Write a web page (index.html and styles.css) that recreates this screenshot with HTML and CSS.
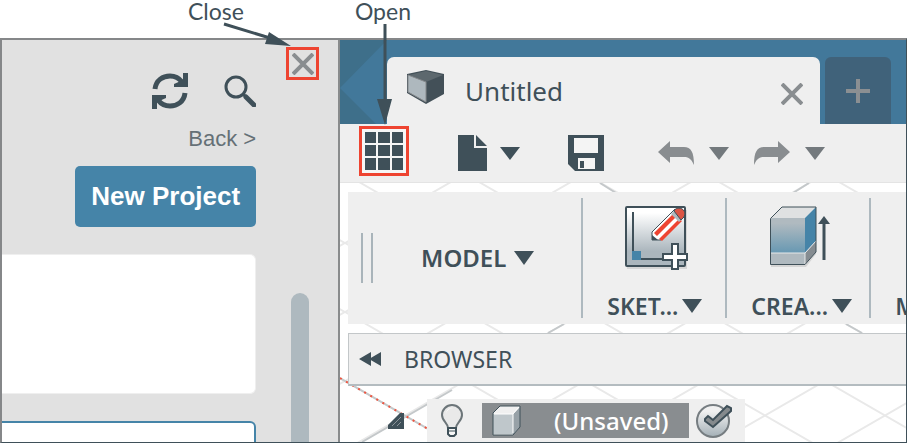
FILE: index.html
```html
<!DOCTYPE html>
<html lang="en">
<head>
<meta charset="utf-8">
<title>Untitled</title>
<link rel="stylesheet" href="styles.css">
</head>
<body>
<div class="captions">
  <span class="caption">Close</span>
  <span class="caption">Open</span>
</div>
<div class="frame">
  <aside class="panel">
    <div class="panel-main">
      <div class="panel-tools">
        <button class="icon-btn" aria-label="Refresh">
          <svg width="36" height="36" viewBox="0 0 36 36"><g fill="none" stroke="#3f5059" stroke-width="5"><path d="M3 16C4 7 11 3 18 3c5 0 9 2 12 6"/><path d="M33 20c-1 9-8 13-15 13-5 0-9-2-12-6"/></g><path fill="#3f5059" d="M36 0v14H22v-3l9-4V0zM0 36V22h14v3l-9 4v7z"/><path fill="#3f5059" d="M35 3v11H22zM1 33V22h13z"/></svg>
        </button>
        <button class="icon-btn" aria-label="Search">
          <svg width="32" height="32" viewBox="0 0 32 32" fill="none" stroke="#3f5059"><circle cx="12" cy="12" r="10" stroke-width="3"/><path d="M19 19l3 3" stroke-width="3"/><path d="M22 22l8 8" stroke-width="5" stroke-linecap="round"/></svg>
        </button>
      </div>
      <a class="back" href="#">Back &gt;</a>
      <button class="new-project">New Project</button>
      <div class="card"></div>
      <div class="card card-selected"></div>
    </div>
    <div class="rail">
      <button class="close-panel" aria-label="Close panel">
        <svg width="22" height="22" viewBox="0 0 22 22" stroke="#898d90" stroke-width="4"><path d="M1 1l20 20M21 1L1 21"/></svg>
      </button>
      <div class="scroll-thumb"></div>
    </div>
  </aside>
  <main class="workspace">
    <div class="tabbar">
      <svg class="facet" width="47" height="84" viewBox="0 0 47 84"><path fill="#3e6f8a" d="M0 0h47L0 48zM0 48l36 36H0z"/></svg>
      <div class="tab">
        <svg class="tab-cube" width="38" height="34" viewBox="0 0 38 34"><path fill="#435058" d="M0 4L19 0l18 4v20L19 34 0 23z"/><path fill="#5d686e" d="M2 5l17-4 17 4-17 7z"/><path fill="#aeb8be" stroke="#86898c" d="M1 5l18 7v20L1 22z"/></svg>
        <span class="tab-title">Untitled</span>
        <button class="icon-btn tab-close" aria-label="Close tab">
          <svg width="22" height="22" viewBox="0 0 22 22" stroke="#898d90" stroke-width="4"><path d="M1 1l20 20M21 1L1 21"/></svg>
        </button>
      </div>
      <button class="new-tab" aria-label="New tab">
        <svg width="24" height="24" viewBox="0 0 24 24" stroke="#8b8f92" stroke-width="4"><path d="M12 0v24M0 12h24"/></svg>
      </button>
    </div>
    <div class="toolbar">
      <button class="grid-btn" aria-label="Data panel">
        <svg width="38" height="38" viewBox="0 0 38 38" fill="#3f5059"><path d="M0 0h11v11H0zM13 0h12v11H13zM27 0h11v11H27zM0 13h11v11H0zM13 13h12v11H13zM27 13h11v11H27zM0 26h11v12H0zM13 26h12v12H13zM27 26h11v12H27z"/></svg>
      </button>
      <button class="icon-btn tool-file" aria-label="File">
        <svg width="29" height="36" viewBox="0 0 29 36" fill="#3f5059"><path d="M0 0h16v13h13v23H0zM18 0l11 11H18z"/></svg>
        <svg width="20" height="13" viewBox="0 0 20 13"><path fill="#3f5059" d="M0 0h20L10 13z"/></svg>
      </button>
      <button class="icon-btn tool-save" aria-label="Save">
        <svg width="36" height="36" viewBox="0 0 36 36"><path fill="#3f5059" d="M0 0h36v36H7l-7-7z"/><path fill="#f4f4f4" d="M6 3h24v15H6zM10 23h17v11H10z"/><path fill="#3f5059" d="M12 26h4v7h-4z"/></svg>
      </button>
      <button class="icon-btn tool-undo" aria-label="Undo">
        <svg width="36" height="24" viewBox="0 0 36 24"><path fill="#898d90" d="M0 11L12 0v6h14c7 0 10 5 10 18-3-7-6-8-10-8H12v6z"/></svg>
        <svg width="20" height="13" viewBox="0 0 20 13"><path fill="#73797d" d="M0 0h20L10 13z"/></svg>
      </button>
      <button class="icon-btn tool-redo" aria-label="Redo">
        <svg width="36" height="24" viewBox="0 0 36 24"><path fill="#898d90" d="M36 11L24 0v6H10C3 6 0 11 0 24c3-7 6-8 10-8h14v6z"/></svg>
        <svg width="20" height="13" viewBox="0 0 20 13"><path fill="#73797d" d="M0 0h20L10 13z"/></svg>
      </button>
    </div>
    <div class="canvas">
      <svg class="canvas-grid" width="100%" height="100%">
        <defs>
          <pattern id="mesh" x="5" y="-9" width="120" height="69" patternUnits="userSpaceOnUse"><path d="M-12 -7l144 83M132 -7L-12 76" fill="none" stroke="#e9e9e9" stroke-width="2"/></pattern>
        </defs>
        <rect width="100%" height="100%" fill="url(#mesh)"/>
        <path d="M22 259L112 207M260 0l16 10M453 10l16-10M208 150l16-9M506 141l16 9" fill="none" stroke="#c4c8ca" stroke-width="2"/>
        <path d="M0 195l88 51" fill="none" stroke="#c4c8ca" stroke-width="2"/>
        <path d="M0 195l88 51" fill="none" stroke="#f0543f" stroke-width="2" stroke-dasharray="2 5"/>
      </svg>
      <div class="ribbon">
        <div class="grip"></div>
        <button class="model">MODEL
          <svg width="20" height="14" viewBox="0 0 20 14"><path fill="#3f5059" d="M0 0h20L10 14z"/></svg>
        </button>
        <div class="group">
          <svg class="group-icon" width="64" height="64" viewBox="0 0 64 64">
            <defs>
              <linearGradient id="sheet" x1="0" y1="0" x2="0" y2="1"><stop offset="0.1" stop-color="#fff"/><stop offset="0.75" stop-color="#abb6bd"/></linearGradient>
            </defs>
            <path fill="#d6d6d6" d="M0 4h62v59H2z"/>
            <rect x="1" y="1" width="59" height="59" rx="1" fill="url(#sheet)" stroke="#3f5059" stroke-width="2"/>
            <path fill="none" stroke="#3f5059" stroke-width="2" d="M8 6v47h30"/>
            <path fill="#4584a8" d="M7 45h9v9H7z"/>
            <path fill="#fff" stroke="#3f5059" stroke-width="1" d="M27 26L50 3l9 7-23 24h-9z"/>
            <path fill="#ee4431" d="M29 27L50 6l3 3-21 21zM34 33l20-20 3 2-20 20z"/>
            <path fill="#aeb9bf" d="M46 8l4-4 8 8-4 4z"/>
            <path fill="#dc5545" stroke="#3f5059" stroke-width="1" d="M49 5c3-6 14-2 10 6l-3 3z"/>
            <path fill="#3f5059" d="M27 29v5h6z"/>
            <path fill="#fff" stroke="#3f5059" stroke-width="2" d="M47 38h6v10h9v6h-9v9h-6v-9h-9v-6h9z"/>
          </svg>
          <button class="group-label">SKET...
            <svg width="20" height="14" viewBox="0 0 20 14"><path fill="#3f5059" d="M0 0h20L10 14z"/></svg>
          </button>
        </div>
        <div class="group">
          <svg class="group-icon" width="64" height="64" viewBox="0 0 64 64">
            <defs>
              <linearGradient id="body" x1="0" y1="0" x2="0" y2="1"><stop offset="0.15" stop-color="#b0bac0"/><stop offset="1" stop-color="#6798b2"/></linearGradient>
            </defs>
            <path fill="#d4d4d4" d="M1 20h46v28L37 61H2z"/>
            <path fill="#dfe1e2" d="M2 12L13 1h34L36 12z"/>
            <path fill="url(#body)" d="M2 12h34v35H2z"/>
            <path fill="#4584a8" d="M36 12L47 1v34L36 47z"/>
            <path fill="#afb9bf" d="M2 47h34v11H2z"/>
            <path fill="#858c91" d="M36 47l11-12v11L36 58z"/>
            <path fill="none" stroke="#e7e9ea" d="M2 47h34l11-12M36 47v11"/>
            <path fill="none" stroke="#3f5059" stroke-width="1" d="M1.500 12.500L13 1h34v45L36 58.500H1.500z"/>
            <path fill="none" stroke="#3f5059" stroke-width="3" d="M55 54V15"/>
            <path fill="#3f5059" d="M49 18l6-8 6 8z"/>
          </svg>
          <button class="group-label">CREA...
            <svg width="20" height="14" viewBox="0 0 20 14"><path fill="#3f5059" d="M0 0h20L10 14z"/></svg>
          </button>
        </div>
        <div class="group group-cut">
          <button class="group-label">M</button>
        </div>
      </div>
      <div class="browser-bar">
        <svg width="22" height="14" viewBox="0 0 22 14" fill="#3f5059"><path d="M0 7l12-7v14zM10 7l12-7v14z"/></svg>
        <span>BROWSER</span>
      </div>
      <div class="tree-row">
        <svg class="tree-toggle" width="16" height="16" viewBox="0 0 16 16"><path fill="#3f5059" d="M12 0h4v16H0v-4z"/><path stroke="#8c959a" d="M4 13l9-9M9 13l4-4"/></svg>
        <div class="tree-item">
          <svg class="bulb" width="22" height="34" viewBox="0 0 22 34"><path fill="#e9e9e9" stroke="#6c7579" stroke-width="2" d="M7 24c0-5-6-7-6-13a10 10 0 0 1 20 0c0 6-6 8-6 13z"/><path fill="#fff" d="M5 10a6 6 0 0 1 7-6 8 8 0 0 0-7 6z"/><path fill="#f7f7f7" stroke="#3f5059" stroke-width="2" d="M7 24h8v6l-2 2H9l-2-2z"/><path stroke="#3f5059" d="M7 27h8"/></svg>
          <div class="tree-name">
            <svg width="30" height="32" viewBox="0 0 30 32"><path fill="#f0f0f0" d="M1 8l7-7h20v21l-7 8H1z"/><path fill="#bfc7cb" d="M1 9h20v20H1z"/><path fill="#97a1a7" d="M21 9l7-7v20l-7 8z"/><path fill="none" stroke="#fff" d="M2 9h19l6-7M21 9v19"/><path fill="none" stroke="#3f5059" stroke-width="1" d="M1 8l7-7h20v21l-7 8H1z"/></svg>
            <span>(Unsaved)</span>
          </div>
          <svg class="check" width="37" height="36" viewBox="0 0 37 36">
            <defs>
              <linearGradient id="disc" x1="0" y1="0" x2="0" y2="1"><stop offset="0.2" stop-color="#f0f0f0"/><stop offset="1" stop-color="#a3afb6"/></linearGradient>
            </defs>
            <circle cx="18" cy="18" r="16" fill="url(#disc)" stroke="#767d81" stroke-width="2"/>
            <path fill="#858a8d" stroke="#3f5059" stroke-width="2" d="M10 16l3-3 5 4L32 3l4 2v3L18 24l-8-6z"/>
          </svg>
        </div>
      </div>
    </div>
  </main>
</div>
<svg class="arrows" width="420" height="130" viewBox="0 0 420 130"><g fill="none" stroke="#3f5059" stroke-width="3"><path d="M224 24l46 14M385 24v76"/></g><path fill="#3f5059" d="M269 32l22 14-26-2zM377 99h15l-7 26z"/></svg>
</body>
</html>
```
FILE: styles.css
```css
* {
  box-sizing: border-box;
}

body {
  margin: 0;
  height: 100vh;
  display: flex;
  flex-direction: column;
  overflow: hidden;
  background: #fff;
  color: #3f5059;
  font-family: "Noto Sans", "Open Sans", sans-serif;
}

button {
  margin: 0;
  padding: 0;
  border: 0;
  background: none;
  color: inherit;
  font: inherit;
}

svg {
  display: block;
  flex: none;
}

.captions {
  flex: none;
  height: 38px;
  display: flex;
  gap: 111px;
  padding-left: 188px;
  font-family: Lato, sans-serif;
  font-size: 23px;
  line-height: 22px;
}

.arrows {
  position: absolute;
  top: 0;
  left: 0;
  pointer-events: none;
}

.frame {
  flex: 1;
  min-height: 0;
  display: grid;
  grid-template-columns: 37.4% minmax(0, 1fr);
  grid-template-rows: minmax(0, 1fr);
  border: 2px solid #858789;
  border-right: 1px solid #3f5059;
  border-bottom: 1px solid #3f5059;
}

.icon-btn {
  display: flex;
  align-items: center;
}

/* Data panel */
.panel {
  display: flex;
  background: #e1e1e1;
  border-right: 2px solid #898b8c;
  overflow: hidden;
}

.panel-main {
  flex: 1;
  display: flex;
  flex-direction: column;
  align-items: flex-end;
  padding-top: 33px;
}

.panel-tools {
  display: flex;
  align-items: center;
  gap: 36px;
}

.back {
  margin-top: 16px;
  color: #657076;
  font-family: "Liberation Sans", sans-serif;
  font-size: 22px;
  line-height: 28px;
  text-decoration: none;
}

.new-project {
  flex: none;
  margin-top: 13px;
  padding: 0 16px;
  height: 61px;
  border-radius: 5px;
  background: #4584a8;
  color: #fff;
  font-family: "Liberation Sans", sans-serif;
  font-size: 26px;
  font-weight: bold;
}

.card {
  flex: none;
  align-self: stretch;
  height: 140px;
  margin-top: 27px;
  border-radius: 0 6px 6px 0;
  border: 1px solid #efefef;
  border-left: 0;
  background: #fff;
}

.card-selected {
  border: 2px solid #4584a8;
  border-left: 0;
}

.rail {
  flex: none;
  width: 82px;
  display: flex;
  flex-direction: column;
  padding: 7px 19px 0 30px;
}

.close-panel {
  width: 33px;
  height: 33px;
  display: flex;
  align-items: center;
  justify-content: center;
  border: 3px solid #ee4431;
}

.scroll-thumb {
  flex: 1;
  width: 18px;
  margin: 213px 0 0 5px;
  border-radius: 9px 9px 0 0;
  background: #aeb9bf;
}

/* Workspace */
.workspace {
  display: flex;
  flex-direction: column;
  overflow: hidden;
}

.tabbar {
  flex: none;
  height: 84px;
  display: flex;
  align-items: flex-end;
  background: #42789a;
}

.tab {
  flex: 1;
  height: 67px;
  display: flex;
  align-items: center;
  padding: 0 17px 0 20px;
  border-radius: 7px 7px 0 0;
  background: #efefef;
}

.tab-cube {
  margin-bottom: 8px;
}

.tab-title {
  flex: 1;
  margin-left: 20px;
  font-size: 26px;
  line-height: 36px;
}

.tab-close {
  margin-top: 6px;
}

.new-tab {
  width: 66px;
  height: 67px;
  margin: 0 15px 0 5px;
  display: flex;
  align-items: center;
  justify-content: center;
  border-radius: 6px 6px 0 0;
  background: #40627a;
}

.toolbar {
  flex: none;
  height: 59px;
  display: flex;
  align-items: center;
  padding-left: 19px;
  background: #efefef;
  border-bottom: 1px solid #e4e4e4;
}

.grid-btn {
  width: 50px;
  height: 50px;
  margin-bottom: 4px;
  display: flex;
  align-items: center;
  justify-content: center;
  border: 3px solid #ee4431;
  background: #f6f6f6;
}

.tool-file {
  margin-left: 49px;
  gap: 13px;
}

.tool-save {
  margin-left: 48px;
}

.tool-undo {
  margin-left: 54px;
  gap: 15px;
}

.tool-redo {
  margin-left: 25px;
  gap: 15px;
}

.canvas {
  position: relative;
  flex: 1;
  min-height: 0;
  padding: 9px 0 0 8px;
  overflow: hidden;
}

.canvas-grid {
  position: absolute;
  top: 0;
  left: 0;
}

.ribbon {
  position: relative;
  height: 132px;
  display: flex;
  align-items: center;
  overflow: hidden;
  background: #efefef;
  font-size: 24px;
  font-weight: 600;
  line-height: 28px;
}

.grip {
  flex: none;
  width: 12px;
  height: 50px;
  margin-left: 13px;
  border: solid #a9b4ba;
  border-width: 0 2px;
}

.model {
  flex: none;
  display: flex;
  align-items: center;
  gap: 8px;
  margin: 0 47px 0 48px;
}

.group {
  flex: none;
  width: 144px;
  height: 120px;
  display: flex;
  flex-direction: column;
  gap: 22px;
  padding: 8px 0 0 24px;
  border-left: 2px solid #aeb9bf;
}

.group-icon {
  margin-left: 18px;
}

.group-label {
  display: flex;
  align-items: center;
  gap: 4px;
  font-size: 23px;
}

.group-cut {
  padding-top: 94px;
}

.browser-bar {
  position: relative;
  height: 53px;
  margin-top: 9px;
  display: flex;
  align-items: center;
  gap: 23px;
  padding-left: 10px;
  border: 1px solid #c3c7c9;
  border-right: 0;
  border-bottom: 2px solid #b4bcc0;
  background: #efefef;
  font-size: 23px;
}

.tree-row {
  position: relative;
  display: flex;
  margin-top: 13px;
  padding-left: 40px;
}

.tree-toggle {
  margin-top: 14px;
}

.tree-item {
  height: 43px;
  display: flex;
  align-items: center;
  margin-left: 23px;
  padding: 0 13px 0 14px;
  background: #efefef;
}

.tree-name {
  width: 207px;
  height: 35px;
  display: flex;
  align-items: center;
  gap: 32px;
  margin: 0 6px 0 19px;
  padding-left: 10px;
  background: #898d90;
  color: #fff;
  font-size: 24px;
  font-weight: 500;
}
```
